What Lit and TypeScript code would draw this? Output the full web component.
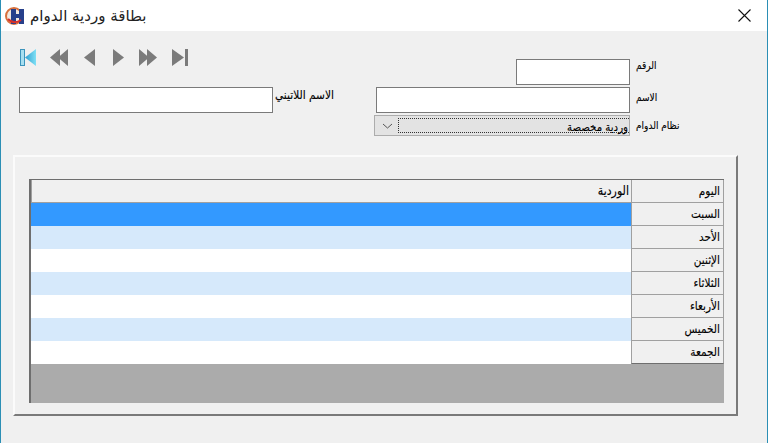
import { LitElement, html, css, svg } from "lit";
import { customElement } from "lit/decorators.js";

const days = ["السبت", "الأحد", "الإثنين", "الثلاثاء", "الأربعاء", "الخميس", "الجمعة"];

const navIcons = [
  svg`<svg width="17" height="19" viewBox="0 0 17 19"><defs><linearGradient id="g" x1="0" x2="1" y1="0" y2="0"><stop offset="0" stop-color="#2f9fd0"/><stop offset="1" stop-color="#7fe0f5"/></linearGradient></defs><rect x="0.5" y="1.5" width="4" height="16" fill="#a8dff0" stroke="#3c94bc"/><path d="M16 1 V18 L5 9.5Z" fill="url(#g)"/></svg>`,
  svg`<svg width="18" height="19" viewBox="0 0 18 19"><path d="M10 1 V18 L0 9.5Z M18 1 V18 L8 9.5Z" fill="#7b7b7b"/></svg>`,
  svg`<svg width="12" height="19" viewBox="0 0 12 19"><path d="M11 1 V18 L0 9.5Z" fill="#7b7b7b"/></svg>`,
  svg`<svg width="12" height="19" viewBox="0 0 12 19"><path d="M1 1 V18 L12 9.5Z" fill="#7b7b7b"/></svg>`,
  svg`<svg width="18" height="19" viewBox="0 0 18 19"><path d="M0 1 V18 L10 9.5Z M8 1 V18 L18 9.5Z" fill="#7b7b7b"/></svg>`,
  svg`<svg width="16" height="19" viewBox="0 0 16 19"><path d="M0 1 V18 L12 9.5Z" fill="#7b7b7b"/><rect x="13" y="1" width="3" height="17" fill="#7b7b7b"/></svg>`,
];
const navGaps = [0, 13, 16, 16, 15, 15];

@customElement("app-root")
export class AppRoot extends LitElement {
  static styles = css`
    :host {
      display: block;
      width: 768px;
      height: 443px;
      overflow: hidden;
      font-family: "DejaVu Sans", "Noto Sans", sans-serif;
      color: #000;
    }
    .window {
      box-sizing: border-box;
      width: 768px;
      height: 443px;
      display: flex;
      flex-direction: column;
      background: #f0f0f0;
      border-left: 1px solid #2b8fb5;
      border-right: 1px solid #2b8fb5;
    }
    .titlebar {
      height: 31px;
      flex: none;
      background: #fff;
      display: flex;
      align-items: center;
      justify-content: space-between;
      padding: 0 16px 0 4px;
    }
    .brand { display: flex; align-items: center; gap: 5px; }
    .app-icon { flex: none; }
    .title {
      direction: rtl;
      font-size: 15px;
      color: #222;
      white-space: nowrap;
    }
    .form {
      height: 124px;
      flex: none;
      box-sizing: border-box;
      display: grid;
      grid-template-columns: 254px 65px 36px 256px 1fr;
      grid-template-rows: 26px 26px 21px;
      row-gap: 2px;
      padding: 28px 0 0 18px;
    }
    .nav {
      grid-column: 1 / 4;
      grid-row: 1;
      display: flex;
      align-items: flex-start;
      margin-top: -11px;
      padding-left: 1px;
    }
    .nav svg, .nav span { display: block; flex: none; }
    .input {
      box-sizing: border-box;
      background: #fff;
      border: 1px solid #7a7a7a;
    }
    .num { grid-column: 4; grid-row: 1; width: 114px; justify-self: end; }
    .name { grid-column: 4; grid-row: 2; width: 254px; justify-self: end; }
    .latin { grid-column: 1; grid-row: 2; }
    .label {
      font-size: 9px;
      white-space: nowrap;
      line-height: 14px;
      padding-left: 6px;
      -webkit-text-stroke: 0.1px #000;
    }
    .label span, .focus span, .hd span {
      display: inline-block;
      transform: scaleY(1.15);
    }
    .l-latin { grid-column: 2; grid-row: 2; font-size: 10.6px; padding-left: 2px; }
    .l-num { grid-column: 5; grid-row: 1; }
    .l-name { grid-column: 5; grid-row: 2; padding-top: 4px; }
    .l-sys { grid-column: 5; grid-row: 3; padding-top: 4px; }
    .select {
      grid-column: 4;
      grid-row: 3;
      box-sizing: border-box;
      background: #e3e3e3;
      border: 1px solid #acacac;
      display: flex;
      align-items: center;
      padding-left: 2px;
    }
    .chev { flex: none; width: 21px; display: flex; justify-content: center; }
    .focus {
      flex: 1;
      align-self: stretch;
      margin: 2px 0;
      padding-right: 1px;
      border: 1px dotted #333;
      border-right: none;
      direction: rtl;
      font-size: 10.2px;
      line-height: 15px;
      white-space: nowrap;
      -webkit-text-stroke: 0.1px #000;
    }
    .panel-wrap {
      flex: 1;
      padding: 0 29px 27px 12px;
      display: flex;
    }
    .panel {
      flex: 1;
      box-sizing: border-box;
      border-top: 2px solid #fbfbfb;
      border-left: 2px solid #fbfbfb;
      border-right: 2px solid #7a7a7a;
      border-bottom: 2px solid #7a7a7a;
      padding: 22px 12px 11px 14px;
      display: flex;
    }
    .table {
      flex: 1;
      box-sizing: border-box;
      background: #ababab;
      border-left: 2px solid #6e6e6e;
      border-top: 1px solid #6e6e6e;
      display: grid;
      grid-template-columns: 1fr 93px;
      grid-auto-rows: 23px;
      align-content: start;
    }
    .hd {
      box-sizing: border-box;
      background: #f0f0f0;
      border-bottom: 1px solid #a0a0a0;
      border-left: 1px solid #a0a0a0;
      direction: rtl;
      font-size: 10.5px;
      line-height: 21px;
      padding-right: 3px;
      white-space: nowrap;
      -webkit-text-stroke: 0.1px #000;
    }
    .day { border-right: 1px solid #a0a0a0; }
    .data { font-size: 11px; padding-right: 2px; }
    .sel { background: #3399ff; }
    .blue { background: #d6e9fb; }
    .white { background: #fff; }
    .last { border-bottom-color: #6e6e6e; }
  `;

  render() {
    return html`
      <div class="window">
        <div class="titlebar">
          <div class="brand">
            <svg class="app-icon" width="20" height="20" viewBox="0 0 20 20">
              <circle cx="9" cy="10" r="8" fill="#f2e8de" stroke="#d8703c" stroke-width="2"/>
              <rect x="6" y="3" width="5" height="15" fill="#27408b"/>
              <rect x="14" y="3" width="5" height="15" fill="#27408b"/>
              <rect x="6" y="8" width="13" height="4" fill="#27408b"/>
              <path d="M3 13 Q9 19 16 14" fill="none" stroke="#d8302a" stroke-width="2"/>
            </svg>
            <div class="title">بطاقة وردية الدوام</div>
          </div>
          <svg width="13" height="13" viewBox="0 0 13 13"><path d="M0.5 0.5 L12.5 12.5 M12.5 0.5 L0.5 12.5" stroke="#111" stroke-width="1.1" fill="none"/></svg>
        </div>
        <div class="form">
          <div class="nav">
            ${navIcons.map((ic, i) => html`<span style="margin-left:${navGaps[i]}px">${ic}</span>`)}
          </div>
          <div class="input num"></div>
          <div class="label l-num"><span>الرقم</span></div>
          <div class="input latin"></div>
          <div class="label l-latin"><span>الاسم اللاتيني</span></div>
          <div class="input name"></div>
          <div class="label l-name"><span>الاسم</span></div>
          <div class="select">
            <div class="chev"><svg width="11" height="6" viewBox="0 0 11 6"><path d="M1 1 L5.5 5 L10 1" fill="none" stroke="#555"/></svg></div>
            <div class="focus"><span>وردية مخصصة</span></div>
          </div>
          <div class="label l-sys"><span>نظام الدوام</span></div>
        </div>
        <div class="panel-wrap">
          <div class="panel">
            <div class="table">
              <div class="hd data"><span>الوردية</span></div>
              <div class="hd day"><span>اليوم</span></div>
              ${days.map((d, i) => html`
                <div class="${i === 0 ? "sel" : i % 2 === 1 ? "blue" : "white"}"></div>
                <div class="hd day ${i === days.length - 1 ? "last" : ""}"><span>${d}</span></div>
              `)}
            </div>
          </div>
        </div>
      </div>
    `;
  }
}
